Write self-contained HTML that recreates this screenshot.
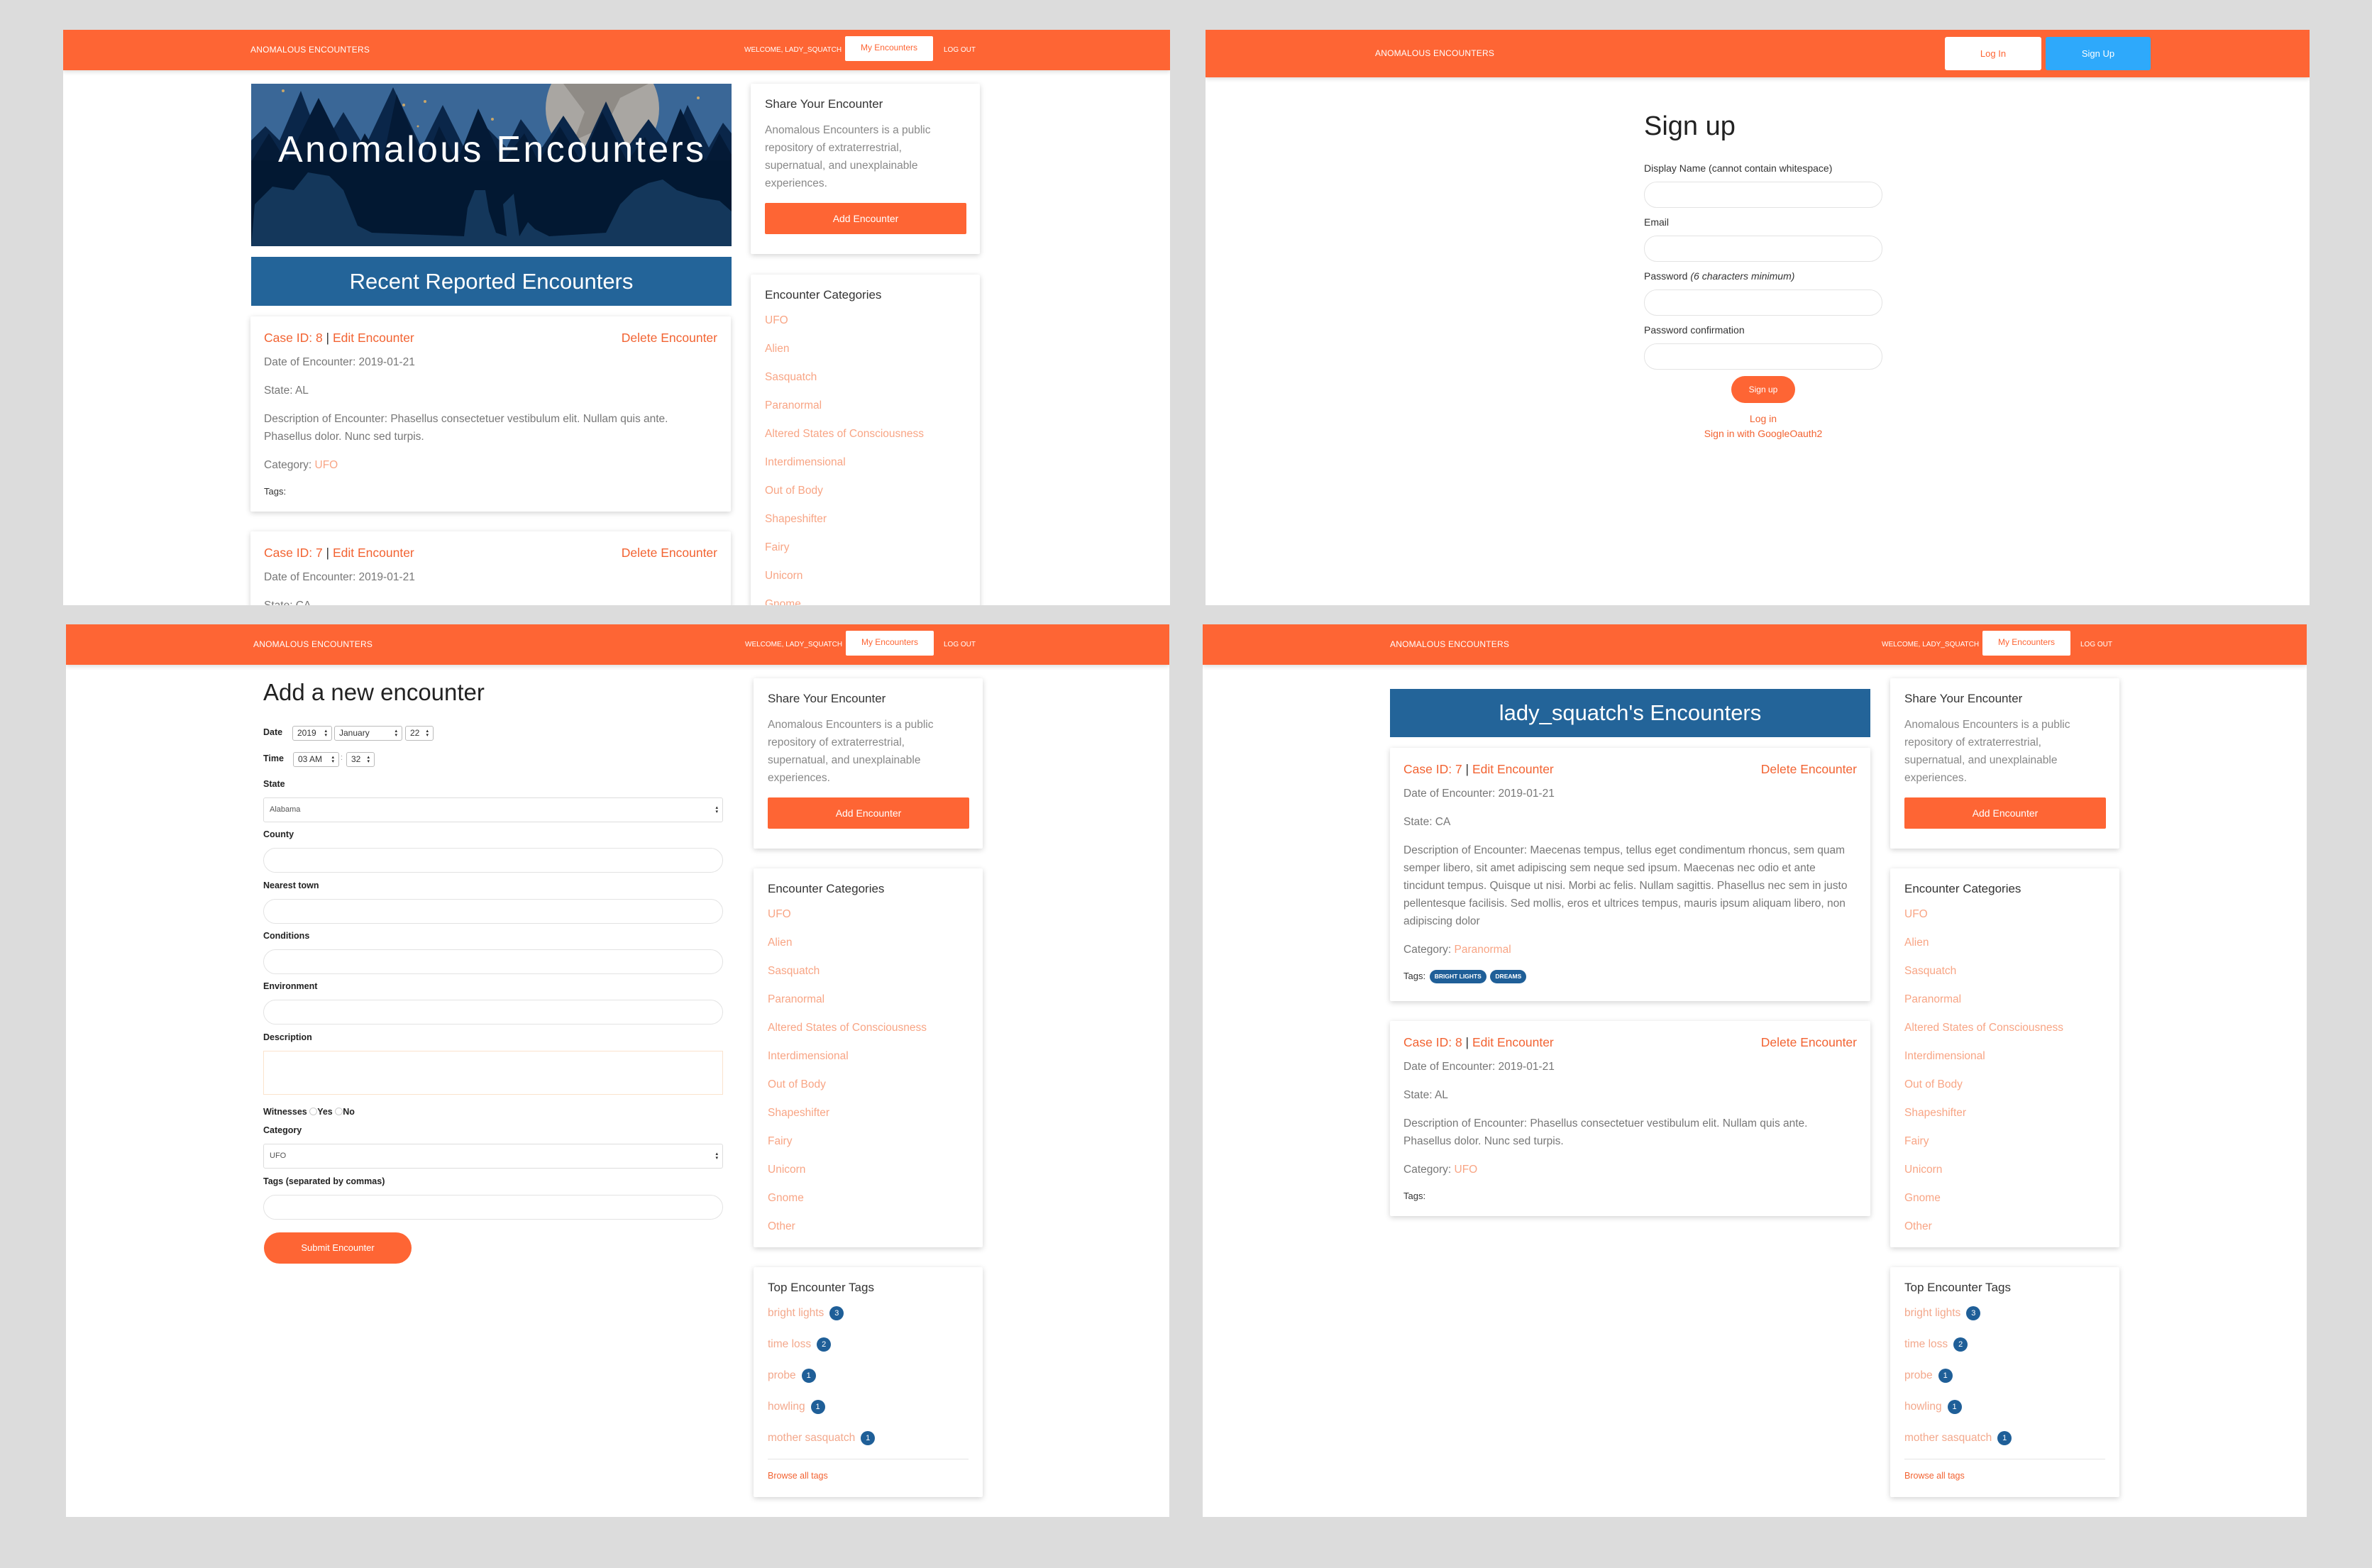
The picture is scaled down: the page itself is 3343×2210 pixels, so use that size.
<!DOCTYPE html>
<html><head><meta charset="utf-8">
<style>
*{box-sizing:border-box;margin:0;padding:0}
body{width:3343px;height:2210px;background:#dcdcdc;font-family:"Liberation Sans",sans-serif;position:relative;overflow:hidden;color:#555}
.panel{position:absolute;background:#fff;overflow:hidden}
.nav{position:absolute;left:0;top:0;right:0;height:57px;background:#fe6534;box-shadow:0 2px 6px rgba(0,0,0,.15)}
.nav .brand{position:absolute;left:264px;top:0;line-height:57px;color:#fff;font-size:12px;letter-spacing:.2px}
.nav .wel{position:absolute;left:957px;line-height:57px;color:#fff;font-size:10px}
.nav .mine{position:absolute;left:1099px;top:9px;width:124px;height:35px;background:#fff;border-radius:2px;color:#fe6534;font-size:12px;text-align:center;line-height:33px}
.nav .out{position:absolute;left:1237px;line-height:57px;color:#fff;font-size:10px}
.card{position:absolute;background:#fff;box-shadow:0 2px 8px rgba(0,0,0,.18);border-radius:2px}
.side{left:969px;width:323px;padding:0 20px}
.side h4{font-weight:normal;color:#333;font-size:17px;position:absolute;left:20px;top:19px}
.side .p{position:absolute;left:20px;top:53px;width:250px;font-size:15.5px;line-height:25px;color:#888}
.side .btn{position:absolute;left:20px;top:168px;width:284px;height:44px;background:#fe6534;color:#fff;font-size:14px;text-align:center;line-height:44px;border-radius:2px}
.side ul{list-style:none;position:absolute;left:20px;top:54px}
.cats li{height:40px;line-height:22px;font-size:15.5px;color:#f8a585}
.tagl li{height:44px;line-height:22px;font-size:15.5px;color:#f3a88c}
.bd{display:inline-block;width:20px;height:20px;border-radius:10px;background:#1f5f98;color:#fff;font-size:11px;text-align:center;line-height:20px;margin-left:8px;vertical-align:1px}
.ecard{left:264px;width:677px;padding:18px 19px 0}
.ecard .t{font-size:17.5px;color:#f26332;line-height:24px;position:relative}
.ecard .t .d{position:absolute;right:0;top:0}
.ecard .t b{font-weight:normal;color:#333}
.ecard p{font-size:15.5px;color:#777;line-height:25px;margin-top:15px}
.ecard p.first{margin-top:10px}
.ecard p a{color:#f8a585}
.ecard .tg{font-size:13px;color:#333;margin-top:12px;line-height:25px}
.pill{display:inline-block;background:#1f5f98;color:#fff;font-size:8.5px;font-weight:bold;padding:0 7px;height:19px;line-height:19px;border-radius:10px;margin-left:2px;vertical-align:1px}
.lbl{position:absolute;left:278px;font-size:12.5px;font-weight:bold;color:#222}
.inp{position:absolute;left:278px;width:648px;height:35px;border:1px solid #e3e3e3;border-radius:18px}
.sel{position:absolute;left:278px;width:648px;height:35px;border:1px solid #ddd;border-radius:3px;font-size:11px;color:#555;line-height:33px;padding-left:8px}
.sel:after,.ms:after{content:"\25B4\A\25BE";white-space:pre;position:absolute;right:6px;top:50%;transform:translateY(-50%);font-size:7px;line-height:6px;color:#222}
.ms{position:absolute;height:21px;border:1px solid #bbb;border-radius:3px;font-size:12px;line-height:19px;padding-left:6px;color:#333}
</style></head><body>

<!-- PANEL 1 -->
<div class="panel" style="left:89px;top:42px;width:1560px;height:811px">
  <div class="nav"><div class="brand">ANOMALOUS ENCOUNTERS</div><div class="wel" style="left:960px">WELCOME, LADY_SQUATCH</div><div class="mine" style="left:1102px">My Encounters</div><div class="out" style="left:1241px">LOG OUT</div></div>
  <svg style="position:absolute;left:265px;top:76px" width="677" height="229" viewBox="0 0 677 229">
    <rect width="677" height="229" fill="#3a6797"/>
    <circle cx="495" cy="35" r="80" fill="#a9a6a2"/>
    <path d="M440 0 L470 40 L455 80 L500 60 L520 20 L560 0Z" fill="#8f8b86"/>
    <g fill="#c9a76a"><circle cx="45" cy="10" r="2"/><circle cx="215" cy="30" r="2"/><circle cx="245" cy="25" r="2"/><circle cx="340" cy="50" r="2"/><circle cx="630" cy="20" r="2"/><circle cx="330" cy="80" r="2"/><circle cx="235" cy="60" r="1.5"/></g>
    <g fill="#0a2649">
      <path d="M0 80 L20 60 L40 80 L70 10 L100 90 L130 40 L160 90 L200 5 L240 90 L270 30 L300 90 L330 60 L360 90 L380 50 L410 90 L440 45 L470 90 L500 25 L530 90 L560 50 L590 90 L615 30 L645 90 L665 55 L677 70 L677 229 L0 229Z"/>
    </g>
    <g fill="#041a36">
      <path d="M0 110 L25 70 L50 110 L95 20 L140 110 L160 70 L185 110 L205 15 L245 110 L265 60 L290 110 L320 35 L355 110 L385 70 L405 110 L435 60 L465 110 L495 40 L530 110 L555 75 L575 110 L605 35 L640 110 L660 70 L677 100 L677 229 L0 229Z"/>
    </g>
    <rect x="0" y="108" width="677" height="121" fill="#021832"/>
    <path d="M0 229 L5 170 L30 145 L60 150 L80 125 L110 130 L130 150 L150 200 L170 210 L300 215 L305 175 L315 150 L330 150 L335 180 L345 210 L360 215 L355 170 L370 155 L378 215 L390 195 L400 205 L420 215 L500 210 L520 170 L540 150 L560 140 L580 135 L600 150 L630 160 L660 165 L677 180 L677 229Z" fill="#14375b"/>
    <text x="338" y="110" text-anchor="middle" fill="#fff" font-family="Liberation Sans" font-size="52" textLength="600">Anomalous Encounters</text>
  </svg>
  <div style="position:absolute;left:265px;top:320px;width:677px;height:69px;background:#236499;color:#fff;font-size:31px;text-align:center;line-height:69px">Recent Reported Encounters</div>
  <div class="card ecard" style="top:404px;height:275px">
    <div class="t">Case ID: 8 <b>|</b> Edit Encounter<span class="d">Delete Encounter</span></div>
    <p class="first">Date of Encounter: 2019-01-21</p>
    <p>State: AL</p>
    <p>Description of Encounter: Phasellus consectetuer vestibulum elit. Nullam quis ante. Phasellus dolor. Nunc sed turpis.</p>
    <p>Category: <a>UFO</a></p>
    <div class="tg">Tags:</div>
  </div>
  <div class="card ecard" style="top:707px;height:200px">
    <div class="t">Case ID: 7 <b>|</b> Edit Encounter<span class="d">Delete Encounter</span></div>
    <p class="first">Date of Encounter: 2019-01-21</p>
    <p>State: CA</p>
  </div>
  <div class="card side" style="top:76px;height:240px"><h4>Share Your Encounter</h4><div class="p">Anomalous Encounters is a public repository of extraterrestrial, supernatual, and unexplainable experiences.</div><div class="btn">Add Encounter</div></div>
  <div class="card side" style="top:345px;height:540px"><h4>Encounter Categories</h4><ul class="cats"><li>UFO</li><li>Alien</li><li>Sasquatch</li><li>Paranormal</li><li>Altered States of Consciousness</li><li>Interdimensional</li><li>Out of Body</li><li>Shapeshifter</li><li>Fairy</li><li>Unicorn</li><li>Gnome</li></ul></div>
</div>

<!-- PANEL 2 -->
<div class="panel" style="left:1699px;top:42px;width:1556px;height:811px">
  <div class="nav" style="height:67px"><div class="brand" style="left:239px;line-height:67px">ANOMALOUS ENCOUNTERS</div>
    <div style="position:absolute;left:1042px;top:10px;width:136px;height:47px;background:#fff;border-radius:3px;color:#fe6534;font-size:13px;text-align:center;line-height:47px">Log In</div>
    <div style="position:absolute;left:1184px;top:10px;width:148px;height:47px;background:#2ea9fb;border-radius:3px;color:#fff;font-size:13px;text-align:center;line-height:47px">Sign Up</div>
  </div>
  <div style="position:absolute;left:618px;top:112px;font-size:38px;color:#222;line-height:48px">Sign up</div>
  <div style="position:absolute;left:618px;top:187px;font-size:14px;color:#333;line-height:16px">Display Name (cannot contain whitespace)</div>
  <div class="inp" style="left:618px;top:214px;width:336px;height:37px"></div>
  <div style="position:absolute;left:618px;top:263px;font-size:14px;color:#333;line-height:16px">Email</div>
  <div class="inp" style="left:618px;top:290px;width:336px;height:37px"></div>
  <div style="position:absolute;left:618px;top:339px;font-size:14px;color:#333;line-height:16px">Password <i>(6 characters minimum)</i></div>
  <div class="inp" style="left:618px;top:366px;width:336px;height:37px"></div>
  <div style="position:absolute;left:618px;top:415px;font-size:14px;color:#333;line-height:16px">Password confirmation</div>
  <div class="inp" style="left:618px;top:442px;width:336px;height:37px"></div>
  <div style="position:absolute;left:741px;top:488px;width:90px;height:38px;border-radius:19px;background:#fe6534;color:#fff;font-size:12px;text-align:center;line-height:38px">Sign up</div>
  <div style="position:absolute;left:586px;width:400px;top:538px;text-align:center;font-size:14px;color:#f26332;line-height:21px">Log in<br>Sign in with GoogleOauth2</div>
</div>

<!-- PANEL 3 -->
<div class="panel" style="left:93px;top:880px;width:1555px;height:1258px">
  <div class="nav"><div class="brand">ANOMALOUS ENCOUNTERS</div><div class="wel" style="left:957px">WELCOME, LADY_SQUATCH</div><div class="mine" style="left:1099px">My Encounters</div><div class="out">LOG OUT</div></div>
  <div style="position:absolute;left:278px;top:76px;font-size:33px;color:#222;line-height:40px">Add a new encounter</div>
  <div class="lbl" style="top:145px">Date</div>
  <div class="ms" style="left:319px;top:143px;width:56px">2019</div>
  <div class="ms" style="left:378px;top:143px;width:96px">January</div>
  <div class="ms" style="left:478px;top:143px;width:40px">22</div>
  <div class="lbl" style="top:182px">Time</div>
  <div class="ms" style="left:320px;top:180px;width:65px">03 AM</div>
  <div style="position:absolute;left:387px;top:182px;font-size:11px;color:#999">:</div>
  <div class="ms" style="left:395px;top:180px;width:40px">32</div>
  <div class="lbl" style="top:218px">State</div><div class="sel" style="top:244px">Alabama</div>
  <div class="lbl" style="top:289px">County</div><div class="inp" style="top:315px"></div>
  <div class="lbl" style="top:361px">Nearest town</div><div class="inp" style="top:387px"></div>
  <div class="lbl" style="top:432px">Conditions</div><div class="inp" style="top:458px"></div>
  <div class="lbl" style="top:503px">Environment</div><div class="inp" style="top:529px"></div>
  <div class="lbl" style="top:575px">Description</div><div class="inp" style="top:601px;height:62px;border-radius:0;border-color:#fbe3cd"></div>
  <div class="lbl" style="top:680px">Witnesses <span style="display:inline-block;width:11px;height:11px;border:1px solid #ccc;border-radius:6px;vertical-align:-1px"></span>Yes <span style="display:inline-block;width:11px;height:11px;border:1px solid #ccc;border-radius:6px;vertical-align:-1px"></span>No</div>
  <div class="lbl" style="top:706px">Category</div><div class="sel" style="top:732px">UFO</div>
  <div class="lbl" style="top:778px">Tags (separated by commas)</div><div class="inp" style="top:804px"></div>
  <div style="position:absolute;left:279px;top:857px;width:208px;height:44px;border-radius:22px;background:#fe6534;color:#fff;font-size:13px;text-align:center;line-height:44px">Submit Encounter</div>
  <div class="card side" style="top:76px;height:240px"><h4>Share Your Encounter</h4><div class="p">Anomalous Encounters is a public repository of extraterrestrial, supernatual, and unexplainable experiences.</div><div class="btn">Add Encounter</div></div>
  <div class="card side" style="top:344px;height:534px"><h4>Encounter Categories</h4><ul class="cats"><li>UFO</li><li>Alien</li><li>Sasquatch</li><li>Paranormal</li><li>Altered States of Consciousness</li><li>Interdimensional</li><li>Out of Body</li><li>Shapeshifter</li><li>Fairy</li><li>Unicorn</li><li>Gnome</li><li>Other</li></ul></div>
  <div class="card side" style="top:906px;height:324px"><h4>Top Encounter Tags</h4><ul class="tagl"><li>bright lights<span class="bd">3</span></li><li>time loss<span class="bd">2</span></li><li>probe<span class="bd">1</span></li><li>howling<span class="bd">1</span></li><li>mother sasquatch<span class="bd">1</span></li></ul>
    <div style="position:absolute;left:20px;right:20px;top:270px;border-top:1px solid #e5e5e5"></div>
    <div style="position:absolute;left:20px;top:287px;font-size:12.5px;color:#f26332">Browse all tags</div></div>
</div>

<!-- PANEL 4 -->
<div class="panel" style="left:1695px;top:880px;width:1556px;height:1258px">
  <div class="nav"><div class="brand">ANOMALOUS ENCOUNTERS</div><div class="wel">WELCOME, LADY_SQUATCH</div><div class="mine">My Encounters</div><div class="out">LOG OUT</div></div>
  <div style="position:absolute;left:264px;top:91px;width:677px;height:68px;background:#236499;color:#fff;font-size:31px;text-align:center;line-height:68px">lady_squatch's Encounters</div>
  <div class="card ecard" style="top:174px;height:357px">
    <div class="t">Case ID: 7 <b>|</b> Edit Encounter<span class="d">Delete Encounter</span></div>
    <p class="first">Date of Encounter: 2019-01-21</p>
    <p>State: CA</p>
    <p>Description of Encounter: Maecenas tempus, tellus eget condimentum rhoncus, sem quam semper libero, sit amet adipiscing sem neque sed ipsum. Maecenas nec odio et ante tincidunt tempus. Quisque ut nisi. Morbi ac felis. Nullam sagittis. Phasellus nec sem in justo pellentesque facilisis. Sed mollis, eros et ultrices tempus, mauris ipsum aliquam libero, non adipiscing dolor</p>
    <p>Category: <a>Paranormal</a></p>
    <div class="tg">Tags: <span class="pill">BRIGHT LIGHTS</span> <span class="pill">DREAMS</span></div>
  </div>
  <div class="card ecard" style="top:559px;height:275px">
    <div class="t">Case ID: 8 <b>|</b> Edit Encounter<span class="d">Delete Encounter</span></div>
    <p class="first">Date of Encounter: 2019-01-21</p>
    <p>State: AL</p>
    <p>Description of Encounter: Phasellus consectetuer vestibulum elit. Nullam quis ante. Phasellus dolor. Nunc sed turpis.</p>
    <p>Category: <a>UFO</a></p>
    <div class="tg">Tags:</div>
  </div>
  <div class="card side" style="top:76px;height:240px"><h4>Share Your Encounter</h4><div class="p">Anomalous Encounters is a public repository of extraterrestrial, supernatual, and unexplainable experiences.</div><div class="btn">Add Encounter</div></div>
  <div class="card side" style="top:344px;height:534px"><h4>Encounter Categories</h4><ul class="cats"><li>UFO</li><li>Alien</li><li>Sasquatch</li><li>Paranormal</li><li>Altered States of Consciousness</li><li>Interdimensional</li><li>Out of Body</li><li>Shapeshifter</li><li>Fairy</li><li>Unicorn</li><li>Gnome</li><li>Other</li></ul></div>
  <div class="card side" style="top:906px;height:324px"><h4>Top Encounter Tags</h4><ul class="tagl"><li>bright lights<span class="bd">3</span></li><li>time loss<span class="bd">2</span></li><li>probe<span class="bd">1</span></li><li>howling<span class="bd">1</span></li><li>mother sasquatch<span class="bd">1</span></li></ul>
    <div style="position:absolute;left:20px;right:20px;top:270px;border-top:1px solid #e5e5e5"></div>
    <div style="position:absolute;left:20px;top:287px;font-size:12.5px;color:#f26332">Browse all tags</div></div>
</div>
</body></html>
